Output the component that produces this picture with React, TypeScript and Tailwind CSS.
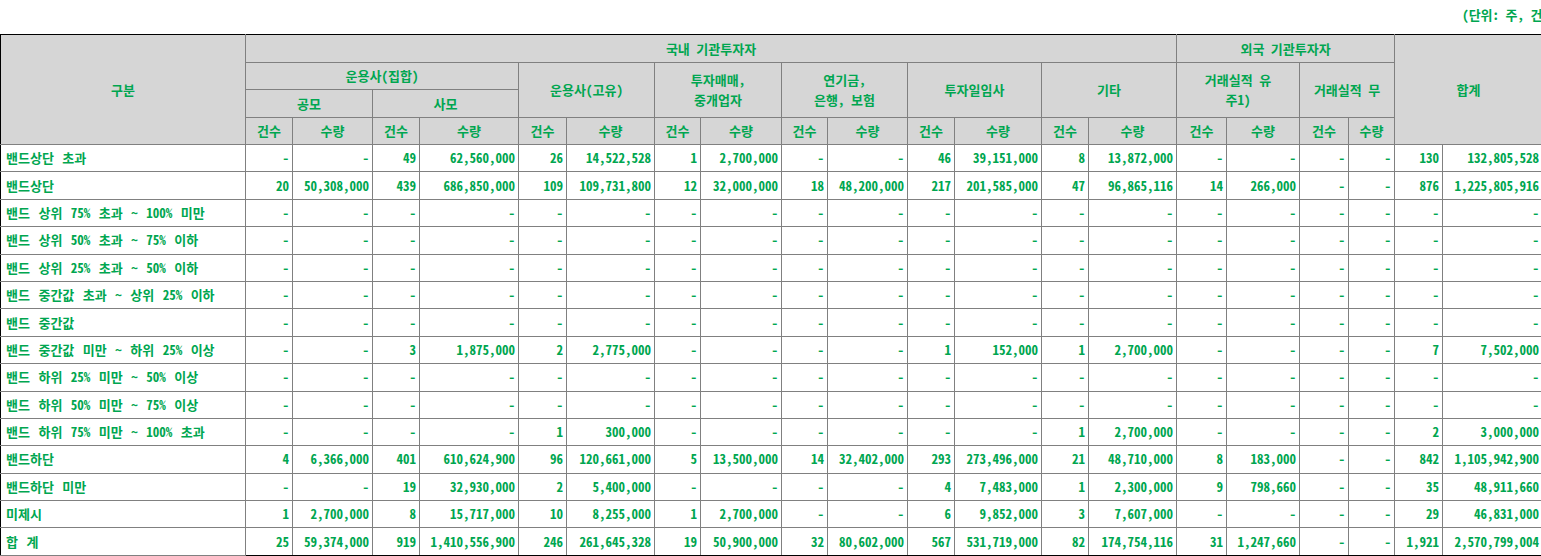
import React from "react";

const COLS = [245, 47, 80, 47, 99, 48, 88, 46, 81, 46, 80, 47, 87, 47, 88, 50, 73, 49, 46, 48, 100];

const ROWS: [string, string[]][] = [
  ["밴드상단 초과", ["-", "-", "49", "62,560,000", "26", "14,522,528", "1", "2,700,000", "-", "-", "46", "39,151,000", "8", "13,872,000", "-", "-", "-", "-", "130", "132,805,528"]],
  ["밴드상단", ["20", "50,308,000", "439", "686,850,000", "109", "109,731,800", "12", "32,000,000", "18", "48,200,000", "217", "201,585,000", "47", "96,865,116", "14", "266,000", "-", "-", "876", "1,225,805,916"]],
  ["밴드 상위 75% 초과 ~ 100% 미만", Array(20).fill("-")],
  ["밴드 상위 50% 초과 ~ 75% 이하", Array(20).fill("-")],
  ["밴드 상위 25% 초과 ~ 50% 이하", Array(20).fill("-")],
  ["밴드 중간값 초과 ~ 상위 25% 이하", Array(20).fill("-")],
  ["밴드 중간값", Array(20).fill("-")],
  ["밴드 중간값 미만 ~ 하위 25% 이상", ["-", "-", "3", "1,875,000", "2", "2,775,000", "-", "-", "-", "-", "1", "152,000", "1", "2,700,000", "-", "-", "-", "-", "7", "7,502,000"]],
  ["밴드 하위 25% 미만 ~ 50% 이상", Array(20).fill("-")],
  ["밴드 하위 50% 미만 ~ 75% 이상", Array(20).fill("-")],
  ["밴드 하위 75% 미만 ~ 100% 초과", ["-", "-", "-", "-", "1", "300,000", "-", "-", "-", "-", "-", "-", "1", "2,700,000", "-", "-", "-", "-", "2", "3,000,000"]],
  ["밴드하단", ["4", "6,366,000", "401", "610,624,900", "96", "120,661,000", "5", "13,500,000", "14", "32,402,000", "293", "273,496,000", "21", "48,710,000", "8", "183,000", "-", "-", "842", "1,105,942,900"]],
  ["밴드하단 미만", ["-", "-", "19", "32,930,000", "2", "5,400,000", "-", "-", "-", "-", "4", "7,483,000", "1", "2,300,000", "9", "798,660", "-", "-", "35", "48,911,660"]],
  ["미제시", ["1", "2,700,000", "8", "15,717,000", "10", "8,255,000", "1", "2,700,000", "-", "-", "6", "9,852,000", "3", "7,607,000", "-", "-", "-", "-", "29", "46,831,000"]],
  ["합 계", ["25", "59,374,000", "919", "1,410,556,900", "246", "261,645,328", "19", "50,900,000", "32", "80,602,000", "567", "531,719,000", "82", "174,754,116", "31", "1,247,660", "-", "-", "1,921", "2,570,799,004"]],
];

const th = "border border-[#808080] bg-[#d6d6d6] text-center align-middle font-bold p-0";
const td = "border border-[#808080] text-right align-middle pr-[3px] pl-0 whitespace-nowrap";

export default function App() {
  return (
    <div className="w-[1541px] h-[556px] overflow-hidden bg-white text-[13px] font-bold text-[#00a650] [font-family:'Noto_Sans_Mono_CJK_KR','Noto_Sans_CJK_KR',sans-serif]">
      {/* unit line */}
      <div className="h-[34px] flex justify-end items-start pt-[6px]">
        <span className="-mr-[8px] leading-[18px] whitespace-nowrap">(단위: 주, 건)</span>
      </div>

      <table className="table-fixed border-collapse w-[1542px] border-y border-l border-y-black border-l-black leading-[20px]">
        <colgroup>
          {COLS.map((w, i) => (
            <col key={i} style={{ width: w }} />
          ))}
        </colgroup>
        <thead>
          <tr className="h-[28px]">
            <th rowSpan={4} className={th + " border-t-black border-l-black"}>구분</th>
            <th colSpan={14} className={th + " border-t-black"}>국내 기관투자자</th>
            <th colSpan={4} className={th + " border-t-black"}>외국 기관투자자</th>
            <th rowSpan={4} colSpan={2} className={th + " border-t-black"}>합계</th>
          </tr>
          <tr className="h-[27px]">
            <th colSpan={4} className={th}>운용사(집합)</th>
            <th colSpan={2} rowSpan={2} className={th}>운용사(고유)</th>
            <th colSpan={2} rowSpan={2} className={th}>투자매매,<br />중개업자</th>
            <th colSpan={2} rowSpan={2} className={th}>연기금,<br />은행, 보험</th>
            <th colSpan={2} rowSpan={2} className={th}>투자일임사</th>
            <th colSpan={2} rowSpan={2} className={th}>기타</th>
            <th colSpan={2} rowSpan={2} className={th}>거래실적 유<br />주1)</th>
            <th colSpan={2} rowSpan={2} className={th}>거래실적 무</th>
          </tr>
          <tr className="h-[28px]">
            <th colSpan={2} className={th}>공모</th>
            <th colSpan={2} className={th}>사모</th>
          </tr>
          <tr className="h-[27px]">
            {Array.from({ length: 9 }).map((_, i) => (
              <React.Fragment key={i}>
                <th className={th}>건수</th>
                <th className={th}>수량</th>
              </React.Fragment>
            ))}
          </tr>
        </thead>
        <tbody>
          {ROWS.map(([label, vals], r) => (
            <tr key={r} className={"h-[27.4px]" + (r === ROWS.length - 1 ? " border-b border-b-black" : "")}>
              <td className="border border-[#808080] border-l-black text-left align-middle pl-[5px] whitespace-nowrap [word-spacing:2px]">
                {label}
              </td>
              {vals.map((v, i) => (
                <td key={i} className={td + (r === ROWS.length - 1 ? " border-b-black" : "")}>
                  {v}
                </td>
              ))}
            </tr>
          ))}
        </tbody>
      </table>
    </div>
  );
}
